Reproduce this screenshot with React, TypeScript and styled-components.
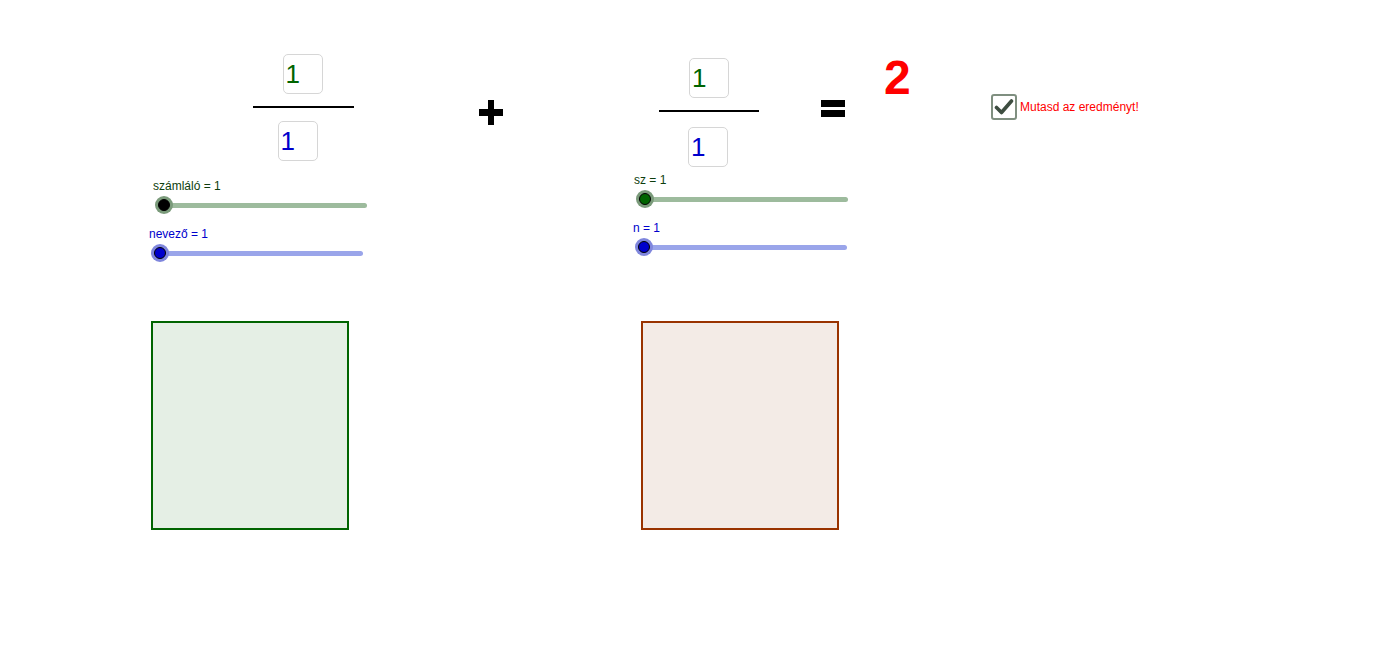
import React from 'react'
import styled, { createGlobalStyle } from 'styled-components'

const GlobalStyle = createGlobalStyle`
    html, body {
        margin: 0;
        padding: 0;
        background: #ffffff;
    }
    body {
        font-family: "Liberation Sans", Arial, sans-serif;
    }
`

// the applet is a free drawing canvas: each group sits at its own coordinates
const Canvas = styled.div`
    position: relative;
    width: 1382px;
    height: 647px;
    overflow: hidden;
    background: #fff;
`

const Placed = styled.div<{ $x: number; $y: number }>`
    position: absolute;
    left: ${p => p.$x}px;
    top: ${p => p.$y}px;
`

const Fraction = styled(Placed)<{ $w: number }>`
    width: ${p => p.$w}px;
    display: flex;
    flex-direction: column;
    align-items: center;
    gap: 12px;
`

const NumberBox = styled.div<{ $color: string; $shift?: number; $drop?: number }>`
    width: 40px;
    height: 40px;
    box-sizing: border-box;
    border: 1px solid #d6d6d6;
    border-radius: 5px;
    background: #fff;
    color: ${p => p.$color};
    font-size: 26px;
    line-height: 38px;
    padding-left: 2px;
    margin-left: ${p => (p.$shift || 0) * 2}px;
    margin-top: ${p => p.$drop || 0}px;
`

const FractionBar = styled.div`
    align-self: stretch;
    height: 2px;
    background: #000;
`

const SliderStack = styled(Placed)`
    display: flex;
    flex-direction: column;
    gap: 13px;
`

const SliderControl = styled.div<{ $indent: number }>`
    display: flex;
    flex-direction: column;
    gap: 3px;
    padding-left: ${p => p.$indent}px;
`

const Label = styled.div<{ $color: string }>`
    font-size: 12px;
    line-height: 14px;
    color: ${p => p.$color};
    white-space: nowrap;
`

const TrackRow = styled.div`
    height: 18px;
    padding-left: 11px;
    display: flex;
    align-items: center;
`

const Track = styled.div<{ $w: number; $color: string }>`
    position: relative;
    width: ${p => p.$w}px;
    height: 5px;
    border-radius: 3px;
    background: ${p => p.$color};
`

const Knob = styled.div<{ $halo: string; $fill: string }>`
    position: absolute;
    left: -9px;
    top: -6.5px;
    width: 18px;
    height: 18px;
    border-radius: 50%;
    background: ${p => p.$halo};
    display: flex;
    align-items: center;
    justify-content: center;
    &::after {
        content: '';
        width: 10px;
        height: 10px;
        border-radius: 50%;
        background: ${p => p.$fill};
        border: 1px solid #000;
    }
`

const Plus = styled(Placed)`
    width: 24px;
    height: 25px;
    &::before, &::after {
        content: '';
        position: absolute;
        background: #000;
    }
    &::before {
        left: 0;
        top: 9px;
        width: 24px;
        height: 7px;
    }
    &::after {
        left: 9px;
        top: 0;
        width: 6px;
        height: 25px;
    }
`

const Equals = styled(Placed)`
    width: 24px;
    display: flex;
    flex-direction: column;
    gap: 3px;
    & span {
        display: block;
        height: 7px;
        background: #000;
    }
`

const Result = styled(Placed)`
    color: #ff0000;
    font-size: 48px;
    font-weight: bold;
    line-height: 48px;
`

const CheckRow = styled(Placed)`
    display: flex;
    align-items: center;
    gap: 3px;
    color: #ff0000;
    font-size: 12px;
`

const CheckBox = styled.div`
    width: 26px;
    height: 26px;
    box-sizing: border-box;
    border: 2px solid #7f8f80;
    border-radius: 3px;
    background: #fff;
    display: flex;
    align-items: center;
    justify-content: center;
`

const SquareRow = styled(Placed)`
    display: flex;
    gap: 292px;
`

const Square = styled.div<{ $stroke: string; $fill: string }>`
    width: 198px;
    height: 209px;
    box-sizing: border-box;
    border: 2px solid ${p => p.$stroke};
    background: ${p => p.$fill};
`

type SliderProps = {
    label: string
    labelColor: string
    indent: number
    length: number
    track: string
    halo: string
    fill: string
}

const Slider: React.FC<SliderProps> = ({ label, labelColor, indent, length, track, halo, fill }) => (
    <SliderControl $indent={indent}>
        <Label $color={labelColor}>{label}</Label>
        <TrackRow>
            <Track $w={length} $color={track}>
                <Knob $halo={halo} $fill={fill} />
            </Track>
        </TrackRow>
    </SliderControl>
)

const GREEN = '#006400'
const BLUE = '#0000cc'
const LABEL_GREEN = '#0d3d0d'
const GREEN_TRACK = '#9dbb9d'
const BLUE_TRACK = '#9aa5ea'
const GREEN_HALO = '#7a9a7a'
const BLUE_HALO = '#7f86dd'

export default function App() {
    return (
        <>
            <GlobalStyle />
            <Canvas>
                <Fraction $x={253} $y={54} $w={101}>
                    <NumberBox $color={GREEN} $shift={-1}>1</NumberBox>
                    <FractionBar />
                    <NumberBox $color={BLUE} $shift={-6} $drop={1}>1</NumberBox>
                </Fraction>

                <SliderStack $x={149} $y={179}>
                    <Slider label="számláló = 1" labelColor={LABEL_GREEN} indent={4} length={203}
                        track={GREEN_TRACK} halo={GREEN_HALO} fill="#000" />
                    <Slider label="nevező = 1" labelColor={BLUE} indent={0} length={203}
                        track={BLUE_TRACK} halo={BLUE_HALO} fill={BLUE} />
                </SliderStack>

                <Plus $x={479} $y={100} />

                <Fraction $x={659} $y={58} $w={100}>
                    <NumberBox $color={GREEN} $shift={0}>1</NumberBox>
                    <FractionBar />
                    <NumberBox $color={BLUE} $shift={-1} $drop={3}>1</NumberBox>
                </Fraction>

                <SliderStack $x={633} $y={173}>
                    <Slider label="sz = 1" labelColor={LABEL_GREEN} indent={1} length={203}
                        track={GREEN_TRACK} halo={GREEN_HALO} fill={GREEN} />
                    <Slider label="n = 1" labelColor={BLUE} indent={0} length={203}
                        track={BLUE_TRACK} halo={BLUE_HALO} fill={BLUE} />
                </SliderStack>

                <Equals $x={821} $y={100}>
                    <span />
                    <span />
                </Equals>
                <Result $x={884} $y={54}>2</Result>

                <CheckRow $x={991} $y={94}>
                    <CheckBox>
                        <svg width="20" height="18" viewBox="0 0 20 18">
                            <path d="M2.5 9.5 L7.5 14.5 L17.5 3" fill="none" stroke="#3d4d40"
                                strokeWidth="3.6" strokeLinecap="round" strokeLinejoin="round" />
                        </svg>
                    </CheckBox>
                    <span>Mutasd az eredményt!</span>
                </CheckRow>

                <SquareRow $x={151} $y={321}>
                    <Square $stroke={GREEN} $fill="#e5efe5" />
                    <Square $stroke="#993300" $fill="#f3ebe6" />
                </SquareRow>
            </Canvas>
        </>
    )
}
